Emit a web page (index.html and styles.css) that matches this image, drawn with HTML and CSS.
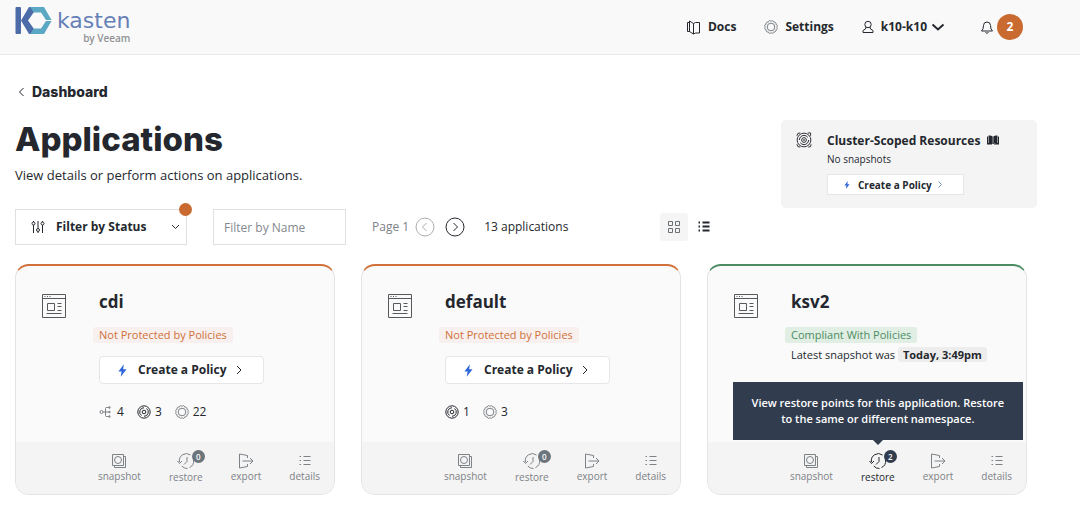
FILE: index.html
```html
<!DOCTYPE html>
<html lang="en">

<head>
    <meta charset="UTF-8">
    <meta name="viewport" content="width=device-width, initial-scale=1.0">
    <title>Applications</title>
    <link rel="stylesheet" href="styles.css">
</head>

<body>
    <!-- Shared icons -->
    <svg class="sprite" aria-hidden="true">
        <symbol id="window" viewBox="0 0 26 26">
            <path d="M1.500 1.500h23v23h-23zM1.500 5.500h23M6.500 10.500h7v7h-7zM16.500 10.500h4M16.500 13.500h4M16.500 17.500h4M5.500 20.500h15" />
            <path d="M3.500 3.500h1M6 3.500h1M8.500 3.500h1" />
        </symbol>
        <symbol id="bolt" viewBox="0 0 10 14">
            <path d="M6.500 0L0.500 8h3.500L3 14 9.500 5.500H5.700z" />
        </symbol>
        <symbol id="right" viewBox="0 0 8 12">
            <path d="M2 2l4 4-4 4" />
        </symbol>
        <symbol id="network" viewBox="0 0 14 14">
            <circle cx="2.500" cy="7" r="1.500" />
            <path d="M4 7h6.500M10 2.500H7.500q-1 0-1 1v7q0 1 1 1H10" />
            <path d="M10 1.800h1v1.400h-1zM10 6.300h1v1.400h-1zM10 10.800h1v1.400h-1z" />
        </symbol>
        <symbol id="disc" viewBox="0 0 14 14">
            <circle cx="7" cy="7" r="6.200" />
            <path d="M4.500 10.500A4.300 4.300 0 0 1 7 2.700M9.500 3.500A4.300 4.300 0 0 1 7 11.300" />
            <circle class="thick" cx="7" cy="7" r="1.800" />
        </symbol>
        <symbol id="gear" viewBox="0 0 14 14">
            <path d="M12.500 7A1.500 1.500 0 0 1 11.800 9.800A1.500 1.500 0 0 1 9.800 11.800A1.500 1.500 0 0 1 7 12.500A1.500 1.500 0 0 1 4.200 11.800A1.500 1.500 0 0 1 2.200 9.800A1.500 1.500 0 0 1 1.500 7A1.500 1.500 0 0 1 2.200 4.200A1.500 1.500 0 0 1 4.200 2.200A1.500 1.500 0 0 1 7 1.500A1.500 1.500 0 0 1 9.800 2.200A1.500 1.500 0 0 1 11.800 4.200A1.500 1.500 0 0 1 12.500 7z" />
            <circle cx="7" cy="7" r="3.800" />
        </symbol>
        <symbol id="snapshot" viewBox="0 0 16 16">
            <path d="M1.500 1.500h11v11h-11zM12.500 3.500h2v11h-11v-2" />
            <circle cx="7" cy="7" r="3.500" />
        </symbol>
        <symbol id="restore" viewBox="0 0 18 18">
            <path d="M2.500 10A7 7 0 0 1 13.500 3M16.500 8A7 7 0 0 1 12.500 15.500M10.500 16.500A7 7 0 0 1 4.800 14" />
            <path d="M0.500 9l2 2.500L5 9M10 5v4.500L7 12.500" />
        </symbol>
        <symbol id="export" viewBox="0 0 16 16">
            <path d="M9.500 5V2.500L1.500 1v14l8-1.500V11M4.500 8H15M12 5l3 3-3 3" />
        </symbol>
        <symbol id="list" viewBox="0 0 12 12">
            <path d="M0.500 1.500H2M4.500 1.500h7M0.500 5.500H2M4.500 5.500h7M0.500 9.500H2M4.500 9.500h7" />
        </symbol>
    </svg>

    <header class="topbar">
        <a class="logo" href="#" aria-label="Kasten by Veeam">
            <svg width="37" height="28" viewBox="0 0 37 28">
                <rect x="0.500" y="0" width="5.500" height="27" rx="1" fill="#4b6ca9" />
                <path d="M14 0h3l2 5-6 8.500L19 22l-3 5h-2L6 13.500z" fill="#4b6ca9" />
                <path d="M15 0H29l7.500 13H31L26 5.500h-7zM19 21.500h7l5-7.500h5.500L29 27H15z" fill="#5ba8c4" />
            </svg>
            <span class="logo-text">
                <span class="logo-name">kasten</span>
                <span class="logo-by">by Veeam</span>
            </span>
        </a>
        <nav class="menu">
            <a href="#">
                <svg class="icon" width="15" height="15" viewBox="0 0 15 15"><path d="M3.500 2.500h-2v9h2M3.500 1l4 2.500v10.500l-4-2.500zM7.500 3.500l2-1h4V13h-4l-2 1" /></svg>
                Docs
            </a>
            <a href="#">
                <svg class="icon soft" width="14" height="14"><use href="#gear" /></svg>
                Settings
            </a>
            <button class="user">
                <svg class="icon" width="12" height="14" viewBox="0 0 12 14"><circle cx="6" cy="4.500" r="3.200" /><path d="M4 7L3.500 9 1 10.500v2h10v-2L8.500 9 8 7" /></svg>
                k10-k10
                <svg class="icon chevron" width="14" height="8" viewBox="0 0 14 8"><path d="M1.500 1.500L7 6.500l5.500-5" /></svg>
            </button>
            <button class="alerts" aria-label="Notifications">
                <svg class="icon" width="12" height="14" viewBox="0 0 12 14"><path d="M.5 11q2-1.500 2-5.500a3.500 3.500 0 0 1 7 0q0 4 2 5.500zM4.500 12.500q1.500 1.500 3 0" /></svg>
                <span class="count">2</span>
            </button>
        </nav>
    </header>

    <main>
        <a class="back" href="#">
            <svg class="icon" width="7" height="10" viewBox="0 0 7 10"><path d="M5.500 1l-4 4 4 4" /></svg>
            Dashboard
        </a>

        <section class="hero">
            <div>
                <h1>Applications</h1>
                <p>View details or perform actions on applications.</p>
            </div>
            <aside class="cluster">
                <svg class="icon" width="16" height="16" viewBox="0 0 17 17">
                    <circle cx="8.500" cy="8.500" r="7.300" />
                    <circle cx="8.500" cy="8.500" r="4.900" stroke-dasharray="12 3" />
                    <circle cx="8.500" cy="8.500" r="2.500" />
                    <circle cx="8.500" cy="8.500" r=".5" />
                    <path d="M1 4l1-2.500 2.500-.5M12.500 1h3v3M1 13l1 2.500 2.500.5M16 13l-.5 2.500-2.500.5" />
                </svg>
                <div>
                    <h2>Cluster-Scoped Resources
                        <svg width="12" height="10" viewBox="0 0 12 10"><path d="M0 1.500h1V8h4v1.500H0zM1.500.5Q4 0 5.700 1.500V9Q4 7.500 1.500 8zM10.500.5Q8 0 6.300 1.500V9Q8 7.500 10.500 8zM11 1.500h1v8H7V8h4z" /></svg>
                    </h2>
                    <p>No snapshots</p>
                    <button class="policy small">
                        <svg class="bolt" width="6" height="8"><use href="#bolt" /></svg>
                        Create a Policy
                        <svg class="icon" width="6" height="9"><use href="#right" /></svg>
                    </button>
                </div>
            </aside>
        </section>

        <div class="toolbar">
            <div class="status">
                <svg class="icon" width="14" height="14" viewBox="0 0 14 14">
                    <path d="M2.500 1v1M2.500 5v8M7 1v7M7 12v1M11.500 1v1M11.500 5v8" />
                    <circle cx="2.500" cy="3.500" r="1.500" /><circle cx="7" cy="10" r="1.500" /><circle cx="11.500" cy="3.500" r="1.500" />
                </svg>
                <select aria-label="Filter by Status">
                    <option>Filter by Status</option>
                </select>
                <svg class="icon" width="9" height="6" viewBox="0 0 9 6"><path d="M1 1l3.500 3.500L8 1" /></svg>
                <span class="dot"></span>
            </div>
            <input class="name" type="text" placeholder="Filter by Name" aria-label="Filter by Name">
            <div class="pager">
                <span class="page">Page 1</span>
                <button class="round" aria-label="Previous page" disabled><svg class="icon" width="20" height="20" viewBox="0 0 20 20"><circle cx="10" cy="10" r="9" /><path d="M11.500 6l-4 4 4 4" /></svg></button>
                <button class="round" aria-label="Next page"><svg class="icon" width="20" height="20" viewBox="0 0 20 20"><circle cx="10" cy="10" r="9" /><path d="M8.500 6l4 4-4 4" /></svg></button>
            </div>
            <span>13 applications</span>
            <div class="views">
                <button class="active" aria-label="Grid view"><svg class="icon" width="14" height="14" viewBox="0 0 14 14"><path d="M1.500 1.500h4v4h-4zM8.500 1.500h4v4h-4zM1.500 8.500h4v4h-4zM8.500 8.500h4v4h-4z" /></svg></button>
                <button aria-label="List view"><svg class="icon heavy" width="12" height="12"><use href="#list" /></svg></button>
            </div>
        </div>

        <div class="cards">
            <!-- cdi -->
            <article class="card">
                <div class="card-body">
                    <svg class="icon" width="26" height="26"><use href="#window" /></svg>
                    <div class="info">
                        <h3>cdi</h3>
                        <span class="tag warn">Not Protected by Policies</span>
                        <button class="policy">
                            <svg class="bolt" width="9" height="13"><use href="#bolt" /></svg>
                            Create a Policy
                            <svg class="icon" width="8" height="12"><use href="#right" /></svg>
                        </button>
                        <ul class="stats">
                            <li><svg class="icon soft" width="14" height="14"><use href="#network" /></svg>4</li>
                            <li><svg class="icon" width="14" height="14"><use href="#disc" /></svg>3</li>
                            <li><svg class="icon soft" width="14" height="14"><use href="#gear" /></svg>22</li>
                        </ul>
                    </div>
                </div>
                <footer class="actions">
                    <button><svg class="icon" width="16" height="16"><use href="#snapshot" /></svg>snapshot</button>
                    <button><svg class="icon" width="18" height="18"><use href="#restore" /></svg>restore<span class="badge">0</span></button>
                    <button><svg class="icon" width="16" height="16"><use href="#export" /></svg>export</button>
                    <button><svg class="icon" width="12" height="12"><use href="#list" /></svg>details</button>
                </footer>
            </article>

            <!-- default -->
            <article class="card">
                <div class="card-body">
                    <svg class="icon" width="26" height="26"><use href="#window" /></svg>
                    <div class="info">
                        <h3>default</h3>
                        <span class="tag warn">Not Protected by Policies</span>
                        <button class="policy">
                            <svg class="bolt" width="9" height="13"><use href="#bolt" /></svg>
                            Create a Policy
                            <svg class="icon" width="8" height="12"><use href="#right" /></svg>
                        </button>
                        <ul class="stats">
                            <li><svg class="icon" width="14" height="14"><use href="#disc" /></svg>1</li>
                            <li><svg class="icon soft" width="14" height="14"><use href="#gear" /></svg>3</li>
                        </ul>
                    </div>
                </div>
                <footer class="actions">
                    <button><svg class="icon" width="16" height="16"><use href="#snapshot" /></svg>snapshot</button>
                    <button><svg class="icon" width="18" height="18"><use href="#restore" /></svg>restore<span class="badge">0</span></button>
                    <button><svg class="icon" width="16" height="16"><use href="#export" /></svg>export</button>
                    <button><svg class="icon" width="12" height="12"><use href="#list" /></svg>details</button>
                </footer>
            </article>

            <!-- ksv2 -->
            <article class="card compliant">
                <div class="card-body">
                    <svg class="icon" width="26" height="26"><use href="#window" /></svg>
                    <div class="info">
                        <h3>ksv2</h3>
                        <span class="tag ok">Compliant With Policies</span>
                        <p class="latest">Latest snapshot was <strong>Today, 3:49pm</strong></p>
                    </div>
                </div>
                <footer class="actions">
                    <button><svg class="icon" width="16" height="16"><use href="#snapshot" /></svg>snapshot</button>
                    <button class="current"><svg class="icon" width="18" height="18"><use href="#restore" /></svg>restore<span class="badge">2</span>
                        <span class="tooltip" role="tooltip">View restore points for this application. Restore to the same or different namespace.</span>
                    </button>
                    <button><svg class="icon" width="16" height="16"><use href="#export" /></svg>export</button>
                    <button><svg class="icon" width="12" height="12"><use href="#list" /></svg>details</button>
                </footer>
            </article>
        </div>
    </main>
</body>

</html>
```
FILE: styles.css
```css
* {
    box-sizing: border-box;
}

body {
    margin: 0;
    font-family: "Open Sans", "Noto Sans", sans-serif;
    font-size: 12px;
    line-height: 16px;
    color: #24282e;
    background: #fff;
}

h1,
h2,
h3,
p,
ul {
    margin: 0;
    padding: 0;
}

a {
    color: inherit;
    text-decoration: none;
}

button {
    font: inherit;
    color: inherit;
    background: none;
    border: none;
    padding: 0;
    cursor: pointer;
}

.sprite {
    display: none;
}

.icon {
    flex: none;
    fill: none;
    stroke: currentColor;
    stroke-width: 1;
}

.soft {
    color: #7b8085;
}

/* Header */
.topbar {
    display: flex;
    justify-content: space-between;
    align-items: flex-start;
    height: 55px;
    padding: 0 57px 0 15px;
    background: #f9f9f9;
    border-bottom: 1px solid #e8e8e8;
}

.logo {
    display: flex;
    gap: 5px;
    padding-top: 7px;
}

.logo-text {
    display: flex;
    flex-direction: column;
    align-items: flex-end;
    padding-top: 3px;
}

.logo-name {
    font-family: "DejaVu Sans", sans-serif;
    font-size: 22px;
    line-height: 22px;
    color: #6580b6;
}

.logo-by {
    font-size: 10px;
    font-weight: 600;
    line-height: 12px;
    color: #909295;
}

.menu {
    display: flex;
    align-items: center;
    height: 54px;
    gap: 28px;
    font-weight: 700;
}

.menu a,
.menu button {
    display: flex;
    align-items: center;
    gap: 7px;
}

.menu .chevron {
    margin-left: -3px;
    stroke-width: 2;
}

.menu .alerts {
    gap: 4px;
    margin-left: 8px;
}

.count {
    width: 26px;
    border-radius: 50%;
    background: #c96a30;
    color: #fff;
    line-height: 26px;
    text-align: center;
}

/* Page heading */
main {
    padding: 28px 43px 16px 15px;
}

.back {
    display: inline-flex;
    align-items: center;
    gap: 7px;
    padding-left: 3px;
    font-family: Inter, sans-serif;
    font-size: 14px;
    font-weight: 800;
    line-height: 18px;
}

.hero {
    display: flex;
    justify-content: space-between;
    margin-top: 19px;
}

.hero h1 {
    font-family: Inter, sans-serif;
    font-size: 33px;
    font-weight: 800;
    line-height: 38px;
}

.hero div > p {
    font-size: 13px;
    line-height: 18px;
    margin-top: 8px;
}

.cluster {
    display: flex;
    align-items: flex-start;
    gap: 15px;
    width: 256px;
    height: 88px;
    padding: 12px 15px;
    border-radius: 5px;
    background: #f4f4f4;
}

.hero .cluster h2 {
    font-size: 12px;
    line-height: 18px;
}

.cluster h2 svg {
    margin-left: 4px;
    fill: #24282e;
}

.hero .cluster p {
    font-size: 10px;
    line-height: 16px;
    margin: 1px 0 7px;
}

.policy {
    display: flex;
    align-items: center;
    height: 28px;
    padding: 0 20px 0 18px;
    gap: 11px;
    border: 1px solid #e6e6e6;
    border-radius: 4px;
    background: #fff;
    font-weight: 700;
}

.policy .icon {
    margin-left: -3px;
}

.policy.small {
    height: 21px;
    padding: 0 20px 0 16px;
    gap: 8px;
    border-radius: 0;
    font-size: 10px;
}

.bolt {
    fill: #2f66d8;
}

.small .icon {
    color: #4f6fac;
}

/* Filters and paging */
.toolbar {
    display: flex;
    align-items: center;
    height: 36px;
    margin-top: 1px;
}

.status {
    position: relative;
    display: flex;
    align-items: center;
    width: 172px;
    height: 36px;
    padding: 0 6px 0 15px;
    gap: 11px;
    border: 1px solid #e0e0e0;
}

.status select {
    flex: 1;
    min-width: 0;
    padding: 0;
    appearance: none;
    border: none;
    background: none;
    color: inherit;
    font: inherit;
    font-weight: 700;
}

.dot {
    position: absolute;
    top: -7px;
    right: -6px;
    width: 13px;
    height: 13px;
    border-radius: 50%;
    background: #c96a30;
}

.name {
    width: 133px;
    height: 36px;
    margin: 0 26px;
    padding: 0 10px;
    border: 1px solid #e0e0e0;
    font: inherit;
}

.name::placeholder {
    color: #84898f;
}

.pager {
    display: flex;
    align-items: center;
    gap: 10px;
    margin-right: 19px;
}

.page {
    margin-right: -4px;
    color: #7c8187;
}

.round {
    display: flex;
}

.round:disabled {
    color: #a9adb1;
}

.views {
    display: flex;
    gap: 2px;
    margin-left: 92px;
}

.views button {
    display: flex;
    align-items: center;
    justify-content: center;
    width: 28px;
    height: 28px;
    border-radius: 3px;
}

.views .active {
    background: #f5f5f5;
    color: #6b7075;
}

.heavy {
    stroke-width: 2;
}

/* Application cards */
.cards {
    display: grid;
    grid-template-columns: repeat(3, 1fr);
    gap: 26px;
    margin: 19px 10px 0 0;
}

.card {
    display: flex;
    flex-direction: column;
    border: 1px solid #e4e4e4;
    border-top: 2px solid #d0703a;
    border-radius: 14px;
    background: #fafafa;
}

.compliant {
    border-top-color: #4c8c63;
}

.card-body {
    display: flex;
    flex: 1;
    gap: 32px;
    padding: 25px 25px 22px;
}

.card-body > .icon {
    margin-top: 2px;
    color: #55585c;
}

.info {
    display: flex;
    flex-direction: column;
    align-items: flex-start;
}

.info h3 {
    font-size: 17px;
    line-height: 22px;
}

.tag {
    margin: 14px 0 0 -6px;
    padding: 0 6px;
    border-radius: 3px;
    font-size: 11px;
    font-weight: 500;
}

.warn {
    color: #d0703a;
    background: #f7f0ee;
}

.ok {
    color: #4c8c63;
    background: #e0eee3;
}

.info .policy {
    margin-top: 13px;
}

.stats {
    display: flex;
    gap: 13px;
    margin-top: 20px;
    list-style: none;
}

.stats li {
    display: flex;
    align-items: center;
    gap: 4px;
}

.stats .thick {
    stroke-width: 2;
}

.latest {
    margin-top: 4px;
    font-size: 11px;
}

.latest strong {
    padding: 0 5px;
    border-radius: 3px;
    background: #ededed;
}

.actions {
    display: flex;
    justify-content: flex-end;
    gap: 28px;
    height: 52px;
    padding: 10px 14px 0;
    border-radius: 0 0 13px 13px;
    background: #f4f4f4;
}

.actions button {
    position: relative;
    display: flex;
    flex-direction: column;
    align-items: center;
    justify-content: space-between;
    height: 31px;
    color: #7d8287;
    font-size: 10px;
    line-height: 14px;
}

.actions button > .icon {
    margin: auto 0;
}

.actions .current {
    color: #24282e;
}

.badge {
    position: absolute;
    top: -2px;
    right: -2px;
    width: 13px;
    border-radius: 50%;
    background: #6c747c;
    color: #fff;
    font-size: 8px;
    font-weight: 600;
    line-height: 13px;
}

.current .badge {
    background: #313c4e;
}

.tooltip {
    position: absolute;
    bottom: calc(100% + 12px);
    left: 50%;
    width: 290px;
    padding: 13px 12px;
    transform: translateX(-50%);
    background: #313c4e;
    color: #fff;
    font-size: 11px;
    font-weight: 600;
    line-height: 16px;
}

.tooltip::after {
    content: "";
    position: absolute;
    top: 100%;
    left: 50%;
    margin-left: -5px;
    border: 5px solid transparent;
    border-top-color: #313c4e;
}
```
